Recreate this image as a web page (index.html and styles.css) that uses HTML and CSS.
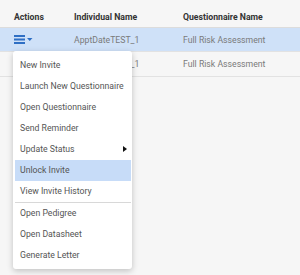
FILE: index.html
```html
<!DOCTYPE html>
<html>
<head>
<meta charset="utf-8">
<link rel="stylesheet" href="styles.css">
</head>
<body>
<div class="page">
  <div class="table">
    <div class="row head">
      <div class="c1">Actions</div>
      <div class="c2">Individual Name</div>
      <div class="c3">Questionnaire Name</div>
    </div>
    <div class="row sel">
      <div class="c1">
        <span class="actbtn">
          <svg width="20" height="10" viewBox="0 0 20 10">
            <rect x="0" y="0" width="11" height="2" fill="#2f6fc4"/>
            <rect x="0" y="3.5" width="11" height="2" fill="#2f6fc4"/>
            <rect x="0" y="7" width="11" height="2" fill="#2f6fc4"/>
            <path d="M13 3 L18.5 3 L15.75 6 Z" fill="#2f6fc4"/>
          </svg>
        </span>
      </div>
      <div class="c2">ApptDateTEST_1</div>
      <div class="c3">Full Risk Assessment</div>
    </div>
    <div class="row">
      <div class="c1"></div>
      <div class="c2">ApptDateTEST_1</div>
      <div class="c3">Full Risk Assessment</div>
    </div>
  </div>
  <div class="menu">
    <div class="item">New Invite</div>
    <div class="item">Launch New Questionnaire</div>
    <div class="item">Open Questionnaire</div>
    <div class="item">Send Reminder</div>
    <div class="item sub">Update Status<span class="arrow"></span></div>
    <div class="item hl">Unlock Invite</div>
    <div class="item">View Invite History</div>
    <div class="sep"></div>
    <div class="item">Open Pedigree</div>
    <div class="item">Open Datasheet</div>
    <div class="item">Generate Letter</div>
  </div>
</div>
</body>
</html>
```
FILE: styles.css
```css
html, body {
  margin: 0;
  padding: 0;
  background: #f6f6f6;
}
body {
  font-family: Roboto, "Liberation Sans", sans-serif;
  font-size: 8.7px;
  width: 300px;
  height: 275px;
  overflow: hidden;
}
.page {
  position: relative;
  width: 300px;
  height: 275px;
}
.table {
  display: flex;
  flex-direction: column;
}
.row {
  display: grid;
  grid-template-columns: 74px 109px 117px;
  height: 24px;
  align-items: center;
  border-bottom: 1px solid #e2e2e2;
  color: #7a7a7a;
}
.row > div:first-child { padding-left: 14px; }
.row.head {
  height: 27px;
  align-items: end;
  color: #333;
  font-weight: bold;
  border-bottom: 1px solid #dcdcdc;
}
.row.head > div { padding-bottom: 5px; }
.row.sel {
  background: #cfe1f8;
  height: 23px;
}
.actbtn {
  display: inline-flex;
  padding-top: 3px;
}
.menu {
  position: absolute;
  left: 13px;
  top: 51px;
  width: 116px;
  padding: 4px 1px 3px 2px;
  background: #fff;
  border-radius: 3px;
  box-shadow: 0 2px 6px rgba(0,0,0,0.22);
  color: #555;
}
.item {
  height: 21px;
  line-height: 21px;
  padding-left: 5px;
  white-space: nowrap;
  position: relative;
}
.item.hl {
  background: #c7dcf8;
}
.arrow {
  position: absolute;
  right: 4px;
  top: 7px;
  width: 0;
  height: 0;
  border-top: 3.5px solid transparent;
  border-bottom: 3.5px solid transparent;
  border-left: 4px solid #111;
}
.sep {
  height: 1px;
  background: #d8d8d8;
}
```
